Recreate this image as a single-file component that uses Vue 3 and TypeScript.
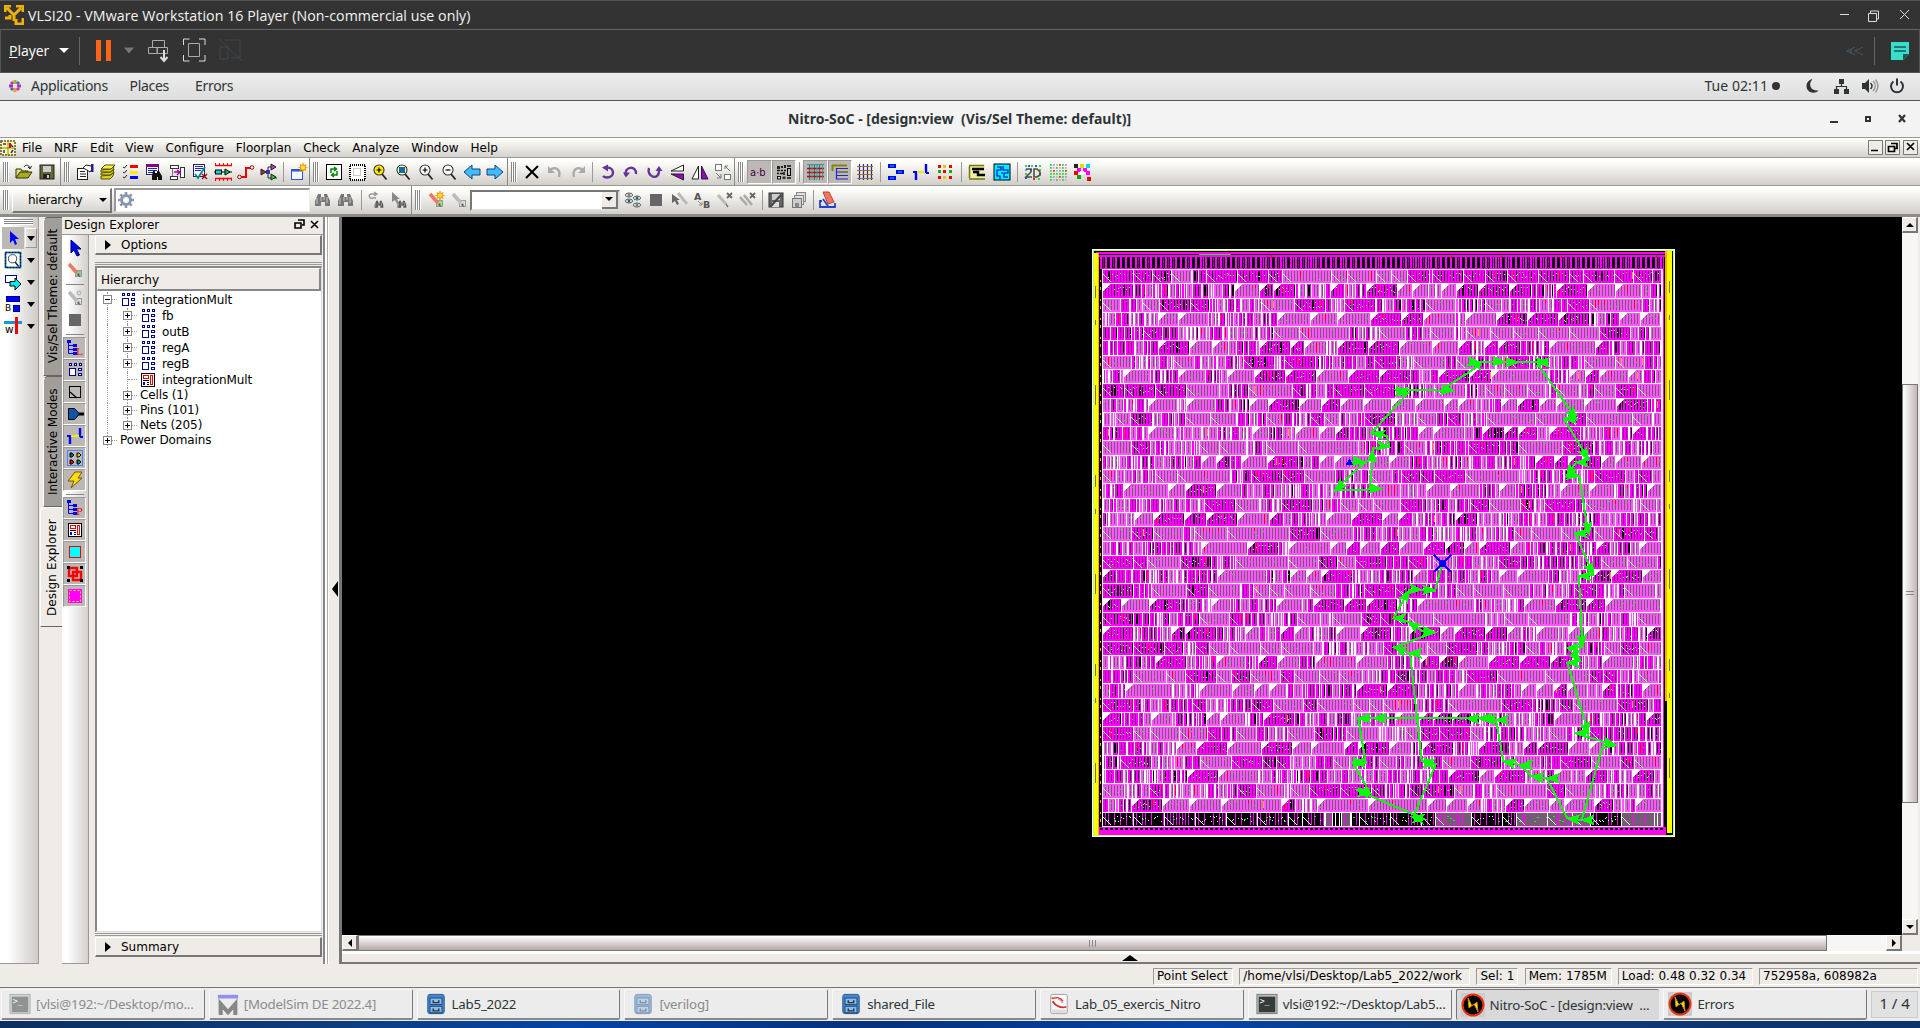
<script setup lang="ts">
type Item = { i?: string; sep?: boolean; on?: boolean; w?: number }

const P = (d: string, c: string, w = 1.3) => `<path d="${d}" fill="none" stroke="${c}" stroke-width="${w}"/>`
const F = (d: string, c: string, s = 'none') => `<path d="${d}" fill="${c}" stroke="${s}"/>`
const R = (x: number, y: number, w: number, h: number, c: string, s = 'none') =>
  `<rect x="${x}" y="${y}" width="${w}" height="${h}" fill="${c}" stroke="${s}"/>`
const dots = (list: [number, number, string][], s: number) => list.map(([x, y, c]) => R(x, y, s, s, c)).join('')

const lens = (fill: string, inner: string) =>
  P('M11 11L15.500 16.500', '#222', 1.8) + `<circle cx="8" cy="7" r="5" fill="${fill}" stroke="#333" stroke-width="1.100"/>` + inner
const binoc = (c: string) =>
  F('M4 3h3v3h3V3h3l3 7v5h-5v-4H7v4H1v-5z', c) + P('M3 7v6M7 6v4M13 6v6M10 5v4', '#ddd', 0.8)
const pencil = (a: string, b: string) =>
  R(9.5, 9.5, 6, 6, b, '#999') + P('M3 3L11 12', a, 3.6) + F('M11 14l3 2-1-4z', '#555')
const hier =
  R(3.5, 2.5, 2, 2, '#fff', '#008') + R(8.5, 2.5, 2, 2, '#fff', '#008') + R(13.5, 2.5, 2, 2, '#fff', '#008') +
  R(3.5, 7.5, 6, 7, '#fff', '#008') + R(12.5, 7.5, 3, 2, '#fff', '#008') + R(12.5, 12.5, 3, 2, '#fff', '#008')
const tree = (t: string) =>
  R(1, 1, 4, 3, '#00f') + P('M2.500 3V14.500H9M3 6.500H9M3 10.500H9', '#00f', 1) + R(7, 5, 4, 3, '#00f') + R(7, 9, 4, 3, '#00f') +
  R(7, 13, 4, 3, '#00f') + t
const leaf =
  R(2.5, 2.5, 13, 13, '#fff', '#000') + R(4.5, 4.5, 5, 3, '#fff', '#e00') + R(11.5, 4.5, 2, 9, '#fff', '#e00') +
  R(4, 11, 2, 3, '#00f') + P('M4 9.500h6M8 11.500h2M8 13.500h2', '#000', 1)
const stars = P('M13 0v9M8.500 4.500h9M10 1.500l6 6M16 1.500l-6 6', '#f90', 1.2) + '<circle cx="13" cy="4.500" r="2.600" fill="#fd4" stroke="#e90"/>'

const icons: Record<string, string> = {
  open: F('M1 15V6h5l1 2h6v2', '#dd8', '#330') + F('M1 15l4-6h12l-4 6z', '#aa2', '#330') + P('M9 4c2-3 5-2 6 1M13 4l2 2 1.500-3', '#222', 1),
  save: R(2, 2, 14, 14, '#663', '#222') + R(5, 3, 8, 6, '#ccc') + R(5, 11, 7, 5, '#222') + R(9, 12, 2, 3, '#ccc'),
  props: R(1.5, 5.5, 10, 11, '#fff', '#222') + P('M4 8.500h5M4 11h6M4 13.500h6', '#222', 1) + F('M7 5l3-3 5 1 2 2-3 4-3-2z', '#fff', '#222') + R(15, 1, 2.500, 8, '#228'),
  layers: F('M2 13l10-1 3-3-1 4-3 3H2z', '#dc2', '#550') + F('M2 10l10-1 3-3-1 4-3 2H2z', '#dc2', '#550') + F('M2 7l10-1 3-3-1 4-3 2H2z', '#dc2', '#550') + F('M6 2h10l-4 4H2z', '#fe4', '#550'),
  list: R(8, 2, 8, 3, '#f00') + R(8, 8, 8, 3, '#fe0') + R(8, 13, 8, 3, '#00f') + P('M1 4l1.500 1L5 2M1 9l1.500 1L5 7M1 14l1.500 1L5 12', '#222', 1),
  find: R(1.5, 1.5, 12, 10, '#fff', '#226') + R(1, 1, 13, 3, '#808') + P('M3 5.500h9M3 7.500h9M3 9.500h5', '#22c', 1) + F('M8 8h2v2h2V8h2l3 5v4h-4v-3h-1v3H7v-4z', '#111'),
  swap: R(2.5, 2.5, 8, 3, '#fff', '#333') + R(2.5, 13.500, 7, 3, '#fff', '#333') + R(12.5, 4.500, 4, 10, '#fff', '#333') + P('M4.500 6v7', '#777', 1) + P('M6 9h6M9 7l3 2-3 3', '#a0a', 1.4),
  check: R(2.5, 1.5, 11, 12, '#fff', '#226') + P('M4 3.500h8M4 5.500h8M4 7.500h6', '#22c', 1) + P('M4 11l3 4L14 4', '#088', 1.8) + P('M11 11l5 5M16 11l-5 5', '#a00', 1.4),
  chain: P('M1 2.500h17M1 15.500h17', '#f00', 1.6) + P('M1.500 3V0M5.500 3V0M9.500 3V0M13.500 3V0M17.500 3V0M1.500 15v3M5.500 15v3M9.500 15v3M13.500 15v3M17.500 15v3', '#f00', 1) + P('M0 9h18', '#000', 1) + R(1.5, 7, 6, 4, '#0dd', '#000') + F('M11 6l5 3-5 3z', '#0c6', '#000'),
  route: P('M3 14h6V5h6', '#e00', 2) + `<circle cx="2.500" cy="14" r="1.800" fill="#fff" stroke="#900"/><circle cx="15" cy="4.500" r="1.800" fill="#fff" stroke="#900"/>`,
  logic: P('M3 9h5V4h4M8 9v6h9', '#224', 1) + F('M11 1l5 3-5 3z', '#c3c', '#222') + F('M11 11l5 3-5 3z', '#2c2', '#222') + F('M1 6l5 3-5 3z', '#a33', '#222') + R(6, 7, 4, 4, '#33a'),
  newwin: R(1.5, 6.500, 11, 10, '#f8f8ff', '#35c') + P('M1 7.500h12', '#35c', 2) + stars,
  refresh: R(1.5, 1.5, 15, 15, '#fff', '#000') + P('M6 10V6h5M9 4l2.500 2L9 8M12 8v4H7M9 10l-2.500 2L9 14', '#080', 1.5),
  selbox: `<rect x="1.500" y="1.500" width="15" height="15" fill="#fff" stroke="#000" stroke-width="2" stroke-dasharray="1 1" shape-rendering="crispEdges"/>` + R(5.5, 5.500, 7, 7, '#fff', '#ccc'),
  zoomfit: lens('#fe0', P('M8 4.500v5M5.500 7h5', '#000', 1.2)), zoomsel: lens('#fff', R(5.5, 4.5, 5, 5, '#26a', '#084')),
  zoomin: lens('#fff', P('M8 4.500v5M5.500 7h5', '#000', 1.2)), zoomout: lens('#fff', P('M5.500 7h5', '#000', 1.2)),
  left: F('M1 9l8-7v4h8v6H9v4z', '#4bf', '#147'), right: F('M17 9L9 2v4H1v6h8v4z', '#4bf', '#147'),
  del: P('M3 3L15 15M15 3L3 15', '#000', 2),
  undo: P('M4 7c5-4 11-1 9 7', '#aaa', 2.4) + F('M2 3v7h7z', '#aaa'), redo: P('M14 7C9 3 3 6 5 14', '#aaa', 2.4) + F('M16 3v7H9z', '#aaa'),
  rotl: P('M8 4.500c8 0 8 10 0 10-2 0-3-.5-4-1.500', '#639', 2.4) + F('M3 4.500l6-3v7z', '#639'), rotu: P('M4 13C1 3 15 2 14 11', '#639', 2.400) + F('M1 9.500l3 5 4-5z', '#639'),
  rotr: P('M4 5c-3 9 10 13 10 3', '#639', 2.400) + F('M10.500 8l3.500-5 3.500 5z', '#639'),
  flipv: F('M15.500 2v6H3z', '#fff', '#222') + F('M15.500 17v-6H3z', '#90c', '#222'), fliph: F('M7.500 3v13H1z', '#fff', '#222') + F('M10.500 3v13H17z', '#90c', '#222'),
  group: R(1.5, 1.500, 6, 6, '#fff', '#777') + R(10.5, 11.500, 6, 5, '#fff', '#777') + P('M16 8l-5-5M11 6V3h3M2 10l5 5M3 15h4v-4', '#777', 1),
  ab: '<text x="0" y="13" font-size="10" font-family="DejaVu Sans" fill="#404">a·b</text>',
  noise: R(2, 3, 3, 3, '#222') + R(6, 3, 2, 2, '#222') + R(9, 2, 2, 3, '#222') + P('M2 7.500h3M6 7.500h2M9 7.500h2M2 10.500h2M5 10.500h3M9 9v3', '#111', 1.6) + R(2.5, 13.500, 3, 2.500, '#ddd', '#111') + R(7.5, 13.500, 3, 2.500, '#333') + R(12.5, 5.500, 3, 7, '#bbb', '#000') + P('M12 15h4M12 3h4', '#111', 1.5),
  grid1: P('M3.500 1v16M8.500 1v16M13.500 1v16', '#088', 1.2) + P('M1 5.500h17M1 9.500h17M1 13.500h17', '#c00', 1.3) + P('M1 1.500h17', '#399', 1) + P('M6 1v16M11 1v16M16.500 1v16', '#399', 1),
  grid2: P('M1 2.500h15M1.500 2v6', '#880', 2) + P('M5 5.500h12M5 9h12M5 12.500h12M5 16h12M5.500 5v11', '#22d', 1.2) + P('M7 7.500h10M7 11h10', '#cc0', 1),
  grid3: P('M3.500 1v16M7.500 1v16M11.500 1v16M15.500 1v16', '#22a', 1.2) + P('M1 3.500h16M1 7.500h16M1 11.500h16M1 15.500h16', '#970', 1),
  bars: R(1, 1, 8, 4, '#00f') + R(9, 7, 8, 4, '#00f') + R(1, 13, 8, 4, '#00f') + P('M3 3h4M11 9h4M3 15h4', '#0d8', 1),
  wire: P('M4 9v8M14 1v9', '#00f', 2.4) + P('M1 9h4M14 10h3', '#00f', 2) + P('M5 9H13', '#ee0', 2.2),
  pts: dots([[2, 2, '#e00'], [7, 2, '#dc0'], [13, 2, '#e00'], [2, 7, '#0b0'], [7, 7, '#e00'], [13, 7, '#0b0'], [2, 13, '#e00'], [7, 13, '#dc0'], [13, 13, '#e00']], 3),
  lay: R(1, 2, 16, 14, '#eea') + P('M1 2.500h15M1 16h16M1.500 3v12', '#770', 1.5) + P('M4 6h12M5 9h5v3h7', '#000', 2.4),
  maze: R(1, 1, 16, 16, '#0ef', '#000') + P('M4 4h4v3H4v6h3v3M10 3v4h5v3h-4v4h4M8 10h2', '#00c', 1.1),
  map: dots([[1, 2, '#4c4'], [4, 2, '#44f'], [7, 2, '#4c4'], [11, 2, '#44f'], [15, 2, '#4c4'], [1, 6, '#88f'], [6, 6, '#44f'], [15, 6, '#4c4'], [1, 10, '#4c4'], [15, 10, '#e22'], [1, 14, '#44f'], [9, 15, '#e22'], [14, 15, '#4c4']], 2) + P('M2 6h5v3L2 14h6M10 14V6h3l3 3v3l-3 2z', '#454', 1.6),
  map2: dots([1, 4, 7, 10, 13, 16].flatMap((x, a) => [1, 4, 7, 10, 13, 16].map((y, b) => [x, y, ['#4c4', '#99f', '#bbb', '#e33'][(a * b + a) % 4]] as [number, number, string])), 1.8),
  mosaic: dots([[1, 1, '#222'], [7, 1, '#dd0'], [13, 1, '#0dd'], [4, 5, '#f0f'], [10, 5, '#f0f'], [1, 8, '#e00'], [7, 8, '#fff'], [13, 8, '#f0f'], [4, 12, '#0a0'], [10, 12, '#ddd'], [14, 14, '#e00']], 4),
  bin: binoc('#777'), binsm: P('M9 3H4c-3 1-2 5 2 4h3M7 1l3 2-3 2', '#999', 1.4) + '<g transform="translate(7 8) scale(.58)">' + binoc('#555') + '</g>',
  curbin: F('M2 1v10l3-2 2 4 2-1-2-4h3z', '#888') + '<g transform="translate(7 8) scale(.58)">' + binoc('#555') + '</g>',
  mark: pencil('#e76', '#9d8') + stars,
  markoff: pencil('#bbb', '#ddd'), eyes: [[5, 4], [13, 7], [5, 10], [13, 14]].map(([x, y], n) => `<ellipse cx="${x}" cy="${y}" rx="3.600" ry="2" fill="#dee" stroke="#555"/><circle cx="${x}" cy="${y}" r="1.300" fill="${n === 1 || n === 2 ? '#066' : '#777'}"/>`).join(''),
  stop: R(3, 3, 12, 12, '#666'), curpen: P('M8 2l9 11', '#bbb', 3) + F('M2 3v9l3-2 2 4 2-1-2-4h3z', '#666'),
  ab2: '<text x="1" y="9" font-size="9.500" font-weight="bold" font-family="DejaVu Sans" fill="#555">A</text><text x="10" y="16.500" font-size="9.500" font-weight="bold" font-family="DejaVu Sans" fill="#555">B</text>' + P('M5 10l4 4M6 14h3v-3', '#888', 1),
  penx: P('M2 4l8 9', '#bbb', 3) + P('M10 13l2 3', '#777', 1.4) + P('M11 2l5 5M16 2l-5 5', '#666', 1.8), penx2: P('M1 6l7 8M5 4l8 10', '#aaa', 2.6) + P('M11 2l5 5M16 2l-5 5', '#666', 1.8),
  dsk: R(2, 2, 14, 14, '#666', '#333') + R(5, 3, 8, 6, '#ccc') + R(5, 11, 7, 5, '#ddd') + P('M4 15L14 4', '#444', 2),
  pages: R(6.5, 1.500, 9, 9, '#ddd', '#888') + R(4.5, 4.5, 9, 9, '#ddd', '#888') + R(2.5, 7.5, 9, 9, '#ccc', '#777') + R(5, 12, 4, 4, '#888'),
  erase: F('M5 1h6l5 10-6 2z', '#e76', '#b43') + P('M4 10H2v6h15v-4M5 8l5 7', '#24c', 1.8),
  cursor: F('M5 1v13l3-3 3 6 2.500-1-3-6H15z', '#00f', '#006'), tcur: F('M6 2v12l3-3 2 5 2-1-2-5h4z', '#00f'),
  pen: pencil('#e87b60', '#8c8'), wand: pencil('#bbb', '#ddd') + `<circle cx="13" cy="4" r="2" fill="#ddd" stroke="#aaa"/>`,
  treeL: tree('<text x="10" y="16" font-size="10" font-family="DejaVu Serif" fill="#e00">L</text>'), treeP: tree('<text x="10" y="16" font-size="10" font-family="DejaVu Serif" fill="#e00">P</text>'),
  hier, leaf, cell: R(3.5, 3.500, 11, 11, '#bbb', '#000') + P('M4 9l7 6', '#000', 1.2), port: P('M9 9h9', '#000', 3) + F('M2.500 3.500h6l5 5.500-5 5.500h-6z', '#15a', '#000'),
  ports: R(1.5, 1.5, 15, 15, '#bbb', '#48f') + [[4, 4, '#15a'], [11, 4, '#cc0'], [4, 11, '#e00'], [11, 11, '#086']].map(([x, y, c]) => F(`M${x} ${y}h2l2 2-2 2h-2z`, c as string, '#000')).join(''),
  bolt: F('M9 1h7l-4 6h4L5 17l3-7H2z', '#fd1', '#750'), cyan: R(3.5, 3.500, 11, 11, '#0ff', '#e00'),
  redsq: P('M3 3h8v8H3zM7 7h8v8H7z', '#f00', 2.400) + dots([[1, 1, '#000'], [14, 1, '#000'], [1, 14, '#000'], [14, 14, '#000']], 3),
  mag: R(2, 2, 14, 14, '#f0f') + `<rect x="3.500" y="3.500" width="11" height="11" fill="none" stroke="#fe0" stroke-dasharray="2 2"/>`,
  zsel: `<rect x="1.500" y="1.500" width="15" height="15" fill="#fff" stroke="#0a0" stroke-width="1.500"/><rect x="1.500" y="1.500" width="15" height="15" fill="none" stroke="#00c" stroke-width="1.500" stroke-dasharray="2 1"/>` + '<g transform="translate(2 2) scale(.82)">' + lens('#fff', '') + '</g>',
  view: R(1.5, 2.500, 11, 7, '#fff', '#008') + F('M6 8.500h5V5l6 6-6 6v-4H6z', '#0ee', '#000'),
  block: R(2.5, 1.5, 13, 5, '#00f', '#008') + R(9.5, 10.500, 6, 6, '#00f', '#008') + '<text x="1" y="16" font-size="9" font-family="DejaVu Sans">B</text>',
  wcross: R(0, 4, 18, 3, '#19d') + R(11, 0, 3, 17, '#f00') + '<text x="1" y="15.500" font-size="10.500" font-family="DejaVu Sans">w</text>',
  gear: `<circle cx="9" cy="9" r="4.500" fill="none" stroke="#89a" stroke-width="3"/>` + P('M9 1v3M9 14v3M1 9h3M14 9h3M3.300 3.300l2 2M12.700 12.700l2 2M14.700 3.300l-2 2M5.300 12.700l-2 2', '#89a', 2.600),
}

const many = (s: string): Item[] => s.split(' ').map(n => n === '|' ? { sep: true } : n.startsWith('+') ? { i: n.slice(1), on: true } : { i: n })
const bar1 = [
  many('open save'), many('props layers list find swap check chain route logic | newwin'),
  many('refresh selbox zoomfit zoomsel zoomin zoomout left right'),
  many('del undo redo | rotl rotu rotr flipv fliph group'),
  many('+ab +noise | +grid1 +grid2 grid3 | bars wire pts | lay maze | map map2 mosaic'),
]
const bar2a = many('bin bin | binsm curbin')
const bar2c = many('eyes stop curpen ab2 penx penx2 | dsk pages | erase')
const side = many('cursor pen | wand stop | +treeL +hier +cell +port +wire +ports +bolt | +treeP +leaf +cyan +redsq +mag')
const tools = ['tcur', 'zsel', 'view', 'block', 'wcross']
const menus = ['File', 'NRF', 'Edit', 'View', 'Configure', 'Floorplan', 'Check', 'Analyze', 'Window', 'Help']

const nodes = [
  { t: 'integrationMult', l: 0, b: '−', i: 'hier', h: 16 }, { t: 'fb', l: 1, b: '+', i: 'hier', h: 16 },
  { t: 'outB', l: 1, b: '+', i: 'hier', h: 16 }, { t: 'regA', l: 1, b: '+', i: 'hier', h: 16 },
  { t: 'regB', l: 1, b: '+', i: 'hier', h: 16 }, { t: 'integrationMult', l: 1, b: '', i: 'leaf', h: 16 },
  { t: 'Cells (1)', l: 1, b: '+', i: '', h: 15 }, { t: 'Pins (101)', l: 1, b: '+', i: '', h: 15 },
  { t: 'Nets (205)', l: 1, b: '+', i: '', h: 15 }, { t: 'Power Domains', l: 0, b: '+', i: '', h: 15 },
]
const status = [['Point Select', 80], ['/home/vlsi/Desktop/Lab5_2022/work', 231], ['Sel: 1', 42], ['Mem: 1785M', 87], ['Load: 0.48 0.32 0.34', 135], ['752958a, 608982a', 159]] as [string, number][]
const tasks = [
  ['[vlsi@192:~/Desktop/mo...', 'term', 1], ['[ModelSim DE 2022.4]', 'm', 1], ['Lab5_2022', 'cab', 0], ['[verilog]', 'cab', 1],
  ['shared_File', 'cab', 0], ['Lab_05_exercis_Nitro', 'doc', 0], ['vlsi@192:~/Desktop/Lab5...', 'term', 0],
  ['Nitro-SoC - [design:view  ...', 'nitro', 0], ['Errors', 'nitro', 0],
] as [string, string, number][]
const taskIcons: Record<string, string> = {
  term: R(1, 1.500, 22, 21, '#bbb', '#777') + R(3, 4, 18, 17, '#343c3a') + '<text x="4" y="12" font-size="9" font-family="DejaVu Sans Mono" fill="#fff">&gt;_</text>',
  m: R(1, 2, 22, 4, '#33f') + P('M4 24V12l8 9 8-9v12', '#222', 4.500),
  cab: `<rect x="3" y="1.500" width="18" height="21" rx="2.500" fill="#48c" stroke="#258"/>` + R(5.5, 5.500, 13, 7, '#8be', '#247') + R(5.5, 14.500, 13, 7, '#8be', '#247') + P('M9 8v2.500h6V8M9 17v2.500h6V17', '#333', 1.600),
  doc: `<rect x="3" y="1.500" width="18" height="21" rx="2" fill="#fafafa" stroke="#999"/>` + R(4, 18, 16, 4, '#ddd') + P('M4 6c5-2 10 0 12 3M5 9c3 5 9 8 15 6', '#c33', 2) + P('M5 5c4 0 9 2 11 6', '#e99', 1.500),
  nitro: R(0, 0, 24, 24, '#ccc') + `<circle cx="12" cy="12" r="10.500" fill="#000" stroke="#e31" stroke-width="2"/>` + F('M7 5l1 10 5-4 4 8-1-10-5 4z', '#fe2', '#c80'),
}

/* Standard-cell layout, drawn row by row from a fixed seed */
let seed = 20220
const rnd = () => { seed = (seed * 1664525 + 1013904223) >>> 0; return seed / 4294967296 }
const layer: Record<string, string[]> = {}
const order = ['mag', 'pink', 'grey', 'plum', 'black', 'stripe', 'green', 'red', 'orange', 'white']
const color: Record<string, string> = { mag: '#f0f', pink: '#ff55ff', grey: '#765a76', plum: '#930093', black: '#000', stripe: '#f0f', green: '#0f0', red: '#f00', orange: '#fa0', white: '#fff' }
order.forEach(k => { layer[k] = [] })
const box = (k: string, x: number, y: number, w: number, h: number) => { layer[k]!.push(`M${x} ${y}h${w}v${h}h${-w}z`) }
const X0 = 1103, X1 = 1662, ROWS = 39, PITCH = 14.290
for (let r = 0; r < ROWS; r++) {
  const y = Math.round(269 + r * PITCH), h = Math.round(269 + (r + 1) * PITCH) - y
  const last = r === ROWS - 1
  box('white', X0 - 1, y, X1 - X0 + 2, 1)
  let x = X0, run = 0, kind = 0
  while (x < X1) {
    if (run <= 0) {
      const busy = r > 3 && r < 14 && x < 1240 ? 0.68 : 0.4
      const q = rnd()
      kind = q < busy ? 2 : q < busy + (1 - busy) * 0.56 ? 1 : 0
      run = kind === 2 ? 2 + Math.floor(rnd() * 4) : 1
    }
    run--
    let w = kind === 0 ? [31, 31, 19, 22, 14][Math.floor(rnd() * 5)]! : kind === 1 ? 14 + Math.floor(rnd() * (rnd() < 0.2 ? 50 : 20)) : 3 + Math.floor(rnd() * 7)
    if (r === 0 || last) { if (kind === 2 && rnd() < 0.5) { kind = 0; w = 31 } }
    w = Math.min(w, X1 - x)
    const dark = kind === 0 || (kind === 2 && rnd() < 0.6)
    const faint = rnd() < 0.4
    box(last ? (dark ? 'black' : 'grey') : dark ? 'mag' : 'pink', x, y + 1, w, h - 1)
    for (let i = 2; i < w - 1; i += 3) {
      if (last) { if (rnd() < 0.6) box('stripe', x + i, y + 1, 1, h - 2); if (rnd() < 0.2) box('green', x + i, y + 4 + Math.floor(rnd() * 6), 2, 1); continue }
      if (dark) {
        const k = rnd() < (faint ? 0.25 : 0.65)
        box(k ? 'black' : 'plum', x + i, y + 2, k && rnd() < 0.15 ? 2 : 1, h - 4)
      } else box('grey', x + i, y + 2, 1, h - 4)
      if (rnd() < 0.22) box('green', x + i, y + 3 + Math.floor(rnd() * 8), 1, 1)
      if (rnd() < 0.035) box('red', x + i, y + 2, 1, 3 + Math.floor(rnd() * 8))
      if (rnd() < 0.006) box('orange', x + i, y + 3, 1, 7)
    }
    if (kind === 0) for (let i = 5; i < w - 3; i += 3) {
      if (rnd() < 0.7) box('white', x + i, y + 4 + Math.floor(rnd() * 3) * 2, 1, 1)
      if (rnd() < 0.3) box('white', x + i + 1, y + 5 + Math.floor(rnd() * 3) * 2, 1, 1)
    }
    if (w > 12) {
      if (r % 2) layer.white!.push(`M${x} ${y}h8l-8 8z`)
      else { for (let i = 0; i < 8; i++) box('white', x + i, y + 5 + i, 1, 1) }
    } else if (rnd() < 0.3) box('white', x, y, 1, h)
    box('white', x + w - 1, y, 1, h)
    if (kind === 2 && w > 4 && rnd() < 0.2) box('white', x + Math.floor(w / 2), y, 1, h)
    x += w
  }
}
for (let x = 1100; x < 1664; x += 5) {
  box('mag', x, 257, 2, 12)
  if (rnd() < 0.55) box(rnd() < 0.4 ? 'mag' : 'plum', x + 3, 257, 1, 12)
  if (rnd() < 0.04) box('red', x + 1, 255, 1, 3)
  box('black', x, 828, 3, 2)
}
const layers = order.map(k => ({ k, c: color[k], d: layer[k]!.join('') }))

const pts = (s: string, oy: number) => s.split(' ').map(p => { const [x, y] = p.split(',').map(Number); return [1320 + x! / 3, oy + y! / 3] as [number, number] })
const net = [
  ...pts('88,396 135,396 45,480 185,478 150,474 160,355 208,350 200,318 155,308 265,188 225,180 400,182 370,176 480,105 450,96 590,97 685,97 655,105 770,268 732,266 805,388 768,397 740,438 778,438 804,606 766,610 820,735 777,738', 330),
  ...pts('777,50 787,260 742,263 780,302 742,308 805,518 766,520 885,555 845,568 785,780 742,775 680,655 632,648 600,615 550,603 528,480 490,475 115,475 137,608 98,606 150,700 110,690 315,778 280,770 348,612 305,603 270,280 222,262 345,217 305,212 265,185 220,175 268,90 345,92 367,10', 560),
]
const netPath = net.map(p => p.map(v => v.toFixed(1)).join(',')).join(' ')
const heads = [
  ...pts('135,396 45,482 185,478 158,360 208,350 155,308 265,188 225,180 402,182 450,97 480,98 595,97 555,97 685,97 650,97 770,270 732,266 806,390 768,397 740,440 778,438 808,612 766,610 820,735 777,738', 330),
  ...pts('787,262 742,263 782,302 742,308 805,525 766,520 886,555 785,780 742,775 680,655 632,648 600,615 550,603 528,480 490,475 475,475 440,475 160,475 115,475 137,610 98,606 150,700 110,690 315,778 275,770 348,612 305,603 268,280 222,262 345,217 265,185 220,175 268,90 305,90 345,90', 560),
].map(([x, y], n) => {
  const ref = net.reduce((b, p) => Math.hypot(p[0] - x, p[1] - y) < Math.hypot(b[0] - x, b[1] - y) ? p : b, net[0]!)
  const k = net.indexOf(ref), q = net[Math.max(0, k - 1)]!
  const t = n % 2 ? Math.atan2(y - q[1], x - q[0]) : (x > q[0] ? 0.1 : Math.PI)
  const pt = (l: number, o: number) => `${(x - l * Math.cos(t) - o * Math.sin(t)).toFixed(1)},${(y - l * Math.sin(t) + o * Math.cos(t)).toFixed(1)}`
  return `${pt(0, 0)} ${pt(12, 4.5)} ${pt(9, 0)} ${pt(12, -4.5)}`
})
</script>

<template>
  <div class="screen">
    <header class="vm-title">
      <svg class="vmlogo" viewBox="0 0 20 20"><path d="M1 7V1h6M12 1h7v6M12 14v5h7v-6M3 3l7 7M17 3l-7 7M10 9v7M1 13h5v-3" fill="none" stroke="#f0b10b" stroke-width="3" /></svg>
      <span>VLSI20 - VMware Workstation 16 Player (Non-commercial use only)</span>
      <svg class="winbtns" viewBox="0 0 90 28"><path d="M10 13.500h9M38.500 12.500h8v8h-8zM40.500 12v-2h8v8h-2M70 9l9 9M79 9l-9 9" fill="none" stroke="#ddd" /></svg>
    </header>
    <div class="vm-bar">
      <span class="player"><u>P</u>layer</span><i class="tri lt" /><i class="vline" />
      <svg class="vmicons" viewBox="0 0 170 42">
        <path d="M16 10h5v21h-5zM26 10h5v21h-5z" fill="#ff6417" /><path d="M44 17.500h10l-5 6z" fill="#777" />
        <g fill="none" stroke="#aaa"><path d="M72.500 10.500h12v7h-12zM68.500 17.500h8.500v6h-8.500zM77.500 17.500h10v6h-10z" /><path d="M84 20v10M80.500 27l3.500 4 3.500-4" stroke="#ddd" stroke-width="2" /><path d="M103.500 15v-6h6M119 9h6v6M125 25v6h-6M109.500 31h-6v-6" stroke="#ddd" /><path d="M108.500 13.500h11v13h-11z" /><path d="M145 10h15v18h-9M140 17h8v12h-8zM139 9l23 22" stroke="#3e4953" /></g>
      </svg>
      <span class="grow" />
      <svg class="rew" viewBox="0 0 18 12"><path d="M9 2L1 6l8 4M17 2L9 6l8 4M5 4v4" fill="none" stroke="#46515b" stroke-width="1.300" /></svg><i class="vline" />
      <svg class="note" viewBox="0 0 20 20"><path d="M1 1h18v12l-6 6H1z" fill="#35dfc8" /><path d="M4 6h12M4 10h12" stroke="#255" stroke-width="1.500" /><path d="M13 19v-6h6z" fill="#255" /></svg>
    </div>
    <nav class="gnome">
      <svg class="flower" viewBox="0 0 14 14"><g stroke-width="3"><path d="M7 1v4" stroke="#9b3" /><path d="M7 9v4" stroke="#e93" /><path d="M1 7h4" stroke="#93c" /><path d="M9 7h4" stroke="#a3c" /><path d="M3 3l2 2M9 9l2 2" stroke="#c39" /><path d="M11 3L9 5M5 9l-2 2" stroke="#569" /></g></svg>
      <span class="n1">Applications</span><span class="n2">Places</span><span class="n3">Errors</span>
      <span class="grow" /><span class="clock">Tue 02:11</span><i class="dot" />
      <svg class="tray" viewBox="0 0 120 28">
        <path d="M12.500 7C8 12 10 19 18.500 18.500 15 22.500 6.500 21 6.500 14c0-4 3-6.500 6-7z" fill="#2e3436" />
        <g fill="#2e3436"><path d="M39 7h5v5h-5zM34 17h5v5h-5zM44 17h5v5h-5zM62 11h3l4-4v14l-4-4h-3z" /></g>
        <g fill="none" stroke="#2e3436"><path d="M41.500 11v3M36.500 17v-2.500h10V17" stroke-width="1.200" /><path d="M70.500 11c2 2 2 4 0 6" stroke-width="1.500" /><path d="M73 9c3 3 3 7 0 10M75.500 7.500c3 4 3 9 0 13" stroke="#999" stroke-width="1.400" /><path d="M93.500 9.500a6 6 0 1 0 7 0M97 6.500v7" stroke-width="2" /></g>
      </svg>
    </nav>
    <div class="apptitle">
      <span class="grow side-l" /><b>Nitro-SoC - [design:view&nbsp; (Vis/Sel Theme: default)]</b>
      <svg class="appbtns" viewBox="0 0 90 34"><path d="M0 21h8M69 14l6 7M75 14l-6 7" stroke="#2e3436" stroke-width="2.200" /><path d="M36 16h4v4h-4z" fill="none" stroke="#2e3436" stroke-width="2" /></svg>
    </div>
    <div class="menu">
      <svg class="mlogo" viewBox="0 0 16 16"><rect x="1" y="1" width="14" height="14" fill="#ff9" stroke="#552" stroke-width="1.500" stroke-dasharray="2 1" /><path d="M8 1v14M1 8h14" stroke="#882" /><path d="M3 4h3M10 4l3 3M4 10v3M11 13l2-3" stroke="#22c" stroke-width="1.500" /><path d="M10 8V3" stroke="#e00" stroke-width="2" /></svg>
      <span v-for="m in menus" :key="m">{{ m }}</span><span class="grow" />
      <svg class="mdi" viewBox="0 0 52 18"><g fill="#efebe7" stroke="#777"><path d="M1.500 1.500h14v14h-14zM18.500 1.500h14v14h-14zM36.500 1.500h14v14h-14z" /></g><path d="M4 11.500h7M24 4.500h6v5h-2M21.500 7.500h6v5h-6zM40 4l7 7M47 4l-7 7" fill="none" stroke="#000" stroke-width="1.700" /></svg>
    </div>
    <div class="bar b1">
      <div v-for="(g, n) in bar1" :key="n" class="group" :class="'g' + n">
        <i class="handle" />
        <template v-for="(it, k) in g" :key="k"><i v-if="it.sep" class="sep" /><span v-else class="slot" :class="{ on: it.on }"><svg viewBox="0 0 18 18" v-html="icons[it.i!]" /></span></template>
      </div>
    </div>
    <div class="bar b2">
      <div class="group ga"><i class="handle" /><span class="hbtn">hierarchy<i class="tri" /></span><span class="field"><svg viewBox="0 0 18 18" v-html="icons.gear" /></span>
        <template v-for="(it, k) in bar2a" :key="k"><i v-if="it.sep" class="sep" /><span v-else class="slot"><svg viewBox="0 0 18 18" v-html="icons[it.i!]" /></span></template>
      </div>
      <div class="group gb"><i class="handle" /><span v-for="n in ['mark', 'markoff']" :key="n" class="slot"><svg viewBox="0 0 18 18" v-html="icons[n]" /></span><span class="combo"><span><i class="tri" /></span></span>
        <template v-for="(it, k) in bar2c" :key="k"><i v-if="it.sep" class="sep" /><span v-else class="slot"><svg viewBox="0 0 18 18" v-html="icons[it.i!]" /></span></template>
      </div>
    </div>
    <main class="main">
      <aside class="tools"><i class="hhandle" /><div v-for="(t, n) in tools" :key="t" class="tool" :class="{ on: n === 0 }"><svg viewBox="0 0 18 18" v-html="icons[t]" /><span><i class="tri big" /></span></div></aside>
      <aside class="tabs"><span class="t1">Vis/Sel Theme: default</span><span class="t2">Interactive Modes</span><span class="t3">Design Explorer</span></aside>
      <section class="dock">
        <div class="docktitle"><span>Design Explorer</span><svg viewBox="0 0 28 14"><path d="M5 2h6v5H9M2 5h6v5H2zM18 3l7 7M25 3l-7 7" fill="none" stroke="#000" stroke-width="1.600" /></svg></div>
        <div class="dockbody">
          <div class="vtools"><template v-for="(it, k) in side" :key="k"><i v-if="it.sep" class="hsep" /><span v-else class="vslot" :class="{ on: it.on }"><svg viewBox="0 0 18 18" v-html="icons[it.i!]" /></span></template></div>
          <div class="panel">
            <div class="fold"><i class="rtri" />Options</div><i class="ridge" />
            <div class="treebox">
              <div class="thead">Hierarchy</div>
              <div v-for="(n, k) in nodes" :key="k" class="node" :class="['l' + n.l, { leafn: !n.b }]" :style="{ height: n.h + 'px' }">
                <i v-if="n.l && k < 9" class="stem" /><i v-if="n.b" class="pm" :class="{ plus: n.b === '+' }" /><i v-else class="nopm" /><i class="twig" /><svg v-if="n.i" viewBox="0 0 18 18" v-html="icons[n.i]" /><span>{{ n.t }}</span>
              </div>
            </div>
            <i class="ridge low" /><div class="fold"><i class="rtri" />Summary</div>
          </div>
        </div>
      </section>
      <div class="splitter"><i class="ltri" /></div>
      <section class="work">
        <div class="view">
          <svg class="chip" viewBox="342 217 1560 718" preserveAspectRatio="none" shape-rendering="crispEdges">
            <rect x="1092" y="249" width="583" height="588" fill="#fff" /><rect x="1093" y="250" width="581" height="586" fill="#b8ff60" /><rect x="1094" y="251" width="579" height="584" fill="#000" />
            <path d="M1096 252h570v2h-570zM1098 255h568v2h-568zM1101 268h562v1h-562zM1098 827h568v8h-568zM1663 256h1v579h-1z" fill="#f0f" />
            <path d="M1094 253h5v582h-5zM1667 251h5v582h-5z" fill="#ff0" />
            <path d="M1098 253h1v582h-1zM1100 280h1v547h-1zM1665 251h2v450h-2z" fill="#fa0" />
            <path d="M1095.500 256v578M1669.500 251v582" stroke="#770" stroke-dasharray="0 30 12 22 5 60 20 40" />
            <path d="M1100.500 282v545" stroke="#000" stroke-dasharray="5 3 9 2" />
            <path d="M1199 254h32v1h-32z" fill="#0f0" />
            <path v-for="l in layers" :key="l.k" :d="l.d" :fill="l.c" />
            <path d="M1662.500 269v558M1102.500 269v558M1102 826.500h560" stroke="#fff" />
            <polyline :points="netPath" fill="none" stroke="#0f0" stroke-width="2" />
            <polygon v-for="(h, k) in heads" :key="k" :points="h" fill="#0f0" stroke="#0f0" stroke-width="1.200" />
            <path d="M1345.500 465l4-6.500 3.500 6.500z" fill="#00f" /><path d="M1434 555l17 17M1451 555l-17 17" stroke="#00f" stroke-width="1.800" /><path d="M1439 560h7v7h-7z" fill="#00f" />
          </svg>
          <div class="vscroll"><span class="sb"><i class="tri up" /></span><div class="trk"><div class="thumb"><i /></div></div><span class="sb"><i class="tri" /></span></div>
        </div>
        <div class="hrow"><span class="sb"><i class="tri le" /></span><div class="hthumb"><i /></div><div class="hrest" /><span class="sb"><i class="tri ri" /></span></div>
        <div class="lower"><i class="tri up huge" /></div>
      </section>
    </main>
    <footer class="status"><span v-for="([t, w]) in status" :key="t" :style="{ width: w + 'px' }">{{ t }}</span></footer>
    <div class="taskbar">
      <div v-for="([t, ic, dim], k) in tasks" :key="k" class="task" :class="{ dim, active: k === 7, wide: ic === 'nitro' }"><svg viewBox="0 0 24 24" v-html="taskIcons[ic]" /><span>{{ t }}</span></div>
      <div class="pager">1 / 4</div>
    </div>
    <div class="desk" />
  </div>
</template>

<style>
body { margin: 0; overflow: hidden; background: #000; }
</style>
<style scoped>
* { box-sizing: border-box; }
.screen { width: 1920px; height: 1028px; display: flex; flex-direction: column; overflow: hidden; font: 12px "DejaVu Sans", sans-serif; color: #000; background: #efebe7; }
.screen > * { flex: none; display: flex; }
svg { display: block; flex: none; }
.tool svg, .vslot svg, .slot svg { overflow: visible; }
span { white-space: pre; }
.grow { flex: 1; }
.tri { width: 0; height: 0; flex: none; border: 4px solid transparent; border-top: 4px solid #000; border-bottom: 0; }
.tri.up { border-top: 0; border-bottom: 4px solid #000; }
.tri.le { border: 4px solid transparent; border-right-color: #000; border-left: 0; }
.tri.ri { border: 4px solid transparent; border-left-color: #000; border-right: 0; }
.vm-title { height: 30px; background: #333; border-top: 1px solid #555; border-bottom: 1px solid #666; align-items: center; color: #f4f4f4; font: 14.2px "Open Sans", sans-serif; letter-spacing: .06px; }
.vmlogo { width: 20px; height: 20px; margin: 0 4px; }
.winbtns { width: 90px; height: 28px; margin-left: auto; }
.vm-bar { height: 43px; background: #333; border-bottom: 1px solid #555; align-items: center; border-left: 1px solid #555; border-right: 1px solid #555; padding-bottom: 1px; }
.player { color: #fff; font: 14px "Open Sans", sans-serif; margin-left: 8px; width: 42px; }
.tri.lt { border: 5px solid transparent; border-top-color: #fff; border-bottom: 0; margin-left: 8px; }
.vm-bar .vline { width: 1px; height: 28px; background: #666; margin-left: 10px; }
.vmicons { width: 170px; height: 42px; }
.rew { width: 18px; height: 12px; margin-right: 0; }
.note { width: 20px; height: 20px; margin: 0 9px 0 15px; }
.gnome { height: 28px; background: linear-gradient(#ececec, #dedede); border-bottom: 1px solid #555; align-items: center; font: 14px "Noto Sans", sans-serif; color: #2e3436; letter-spacing: -.3px; padding-bottom: 2px; }
.flower { width: 14px; height: 14px; margin: 0 9px 0 8px; }
.n1 { width: 98.500px; } .n2 { width: 65.500px; }
.clock { letter-spacing: .05px; }
.dot { width: 8px; height: 8px; border-radius: 4px; background: #2e3436; margin-left: 4px; }
.tray { width: 120px; height: 28px; margin-left: 20px; }
.apptitle { height: 37px; background: #f3f3f3; border-bottom: 1px solid #999; align-items: center; color: #2e3436; padding-bottom: 2px; }
.side-l { flex: 0 0 788px; }
.apptitle b { font: 700 14px "Noto Sans", sans-serif; width: 1042px; letter-spacing: .02px; }
.appbtns { width: 90px; height: 34px; }
.menu { height: 20px; background: linear-gradient(#fffffc, #d6d2ce); border-bottom: 1px solid #999; align-items: center; }
.mlogo { width: 16px; height: 16px; margin-right: 6px; }
.menu > span:not(.grow) { margin-right: 11.900px; }
.mdi { width: 52px; height: 18px; margin-right: 1px; }
.bar { height: 28px; background: linear-gradient(#fffffb 10%, #d2cfcb); border-bottom: 1px solid #999; }
.b2 { height: 31px; border-bottom: 3px solid #8d8b88; }
.group { display: flex; align-items: center; border-right: 1px solid #888; flex: none; }
.g4, .gb { border-right: 0; }
.g0 { width: 61px; } .g1 { width: 249px; } .g2 { width: 198px; } .g3 { width: 227px; }
.handle { width: 6px; height: 20px; margin: 0 3px 0 3px; background: repeating-linear-gradient(90deg, #888 0 1px, #fff 1px 2px); flex: none; }
.slot { width: 23px; height: 24px; display: flex; align-items: center; justify-content: center; flex: none; }
.slot svg { width: 18px; height: 18px; }
.g4 .slot { width: 24.600px; }
.slot.on, .vslot.on { background: #bbb8b5; border: 1px solid #999; border-right-color: #fff; border-bottom-color: #fff; }
.sep { width: 1px; height: 20px; background: #999; margin: 0 3px; flex: none; }
.ga { width: 412px; }
.gb .sep { margin: 0 2px; }
.ga .slot { width: 22.800px; } .gb .slot { width: 23.100px; }
.hbtn { width: 100px; height: 25px; border: 1px solid #fff; border-right: 2px solid #777; border-bottom: 2px solid #777; display: flex; align-items: center; justify-content: space-between; padding: 0 3px 0 15px; letter-spacing: -.25px; flex: none; }
.field { width: 196px; height: 24px; margin: 0 2px; background: #fff; border: 2px solid #999; border-right: 1px solid #eee; border-bottom: 1px solid #eee; padding: 1px; flex: none; }
.field svg { width: 18px; height: 18px; }
.combo { width: 150px; height: 21px; margin: 0 1px 0 0; border: 2px solid #777; border-right-color: #ddd; border-bottom-color: #ddd; background: #fff; display: flex; justify-content: flex-end; flex: none; }
.combo span { width: 16px; background: #efebe7; border-right: 2px solid #777; border-bottom: 2px solid #777; display: flex; align-items: center; justify-content: center; }
.main { height: 747px; }
.tools { width: 39px; height: 747px; background: linear-gradient(90deg, #fff 20%, #cfccc8); border-right: 1px solid #999; border-bottom: 1px solid #999; flex: none; }
.hhandle { display: block; height: 6px; margin: 2px 5px 2px 4px; background: repeating-linear-gradient(#888 0 1px, #fff 1px 2px); }
.tool { height: 22px; display: flex; align-items: center; padding-left: 4px; }
.tool svg { width: 18px; height: 18px; }
.tool.on { background: linear-gradient(90deg, transparent 2px, #bbb8b5 2px 24px, transparent 24px); }
.tool > span { margin-left: 3px; width: 12px; height: 20px; display: flex; align-items: center; justify-content: center; }
.tool.on > span { border: 1px solid #fff; border-right-color: #999; border-bottom-color: #999; }
.tri.big { border-width: 5px 4.500px 0; }
.tabs { width: 23px; display: flex; flex-direction: column; align-items: flex-end; flex: none; }
.tabs span { writing-mode: vertical-rl; transform: rotate(180deg); width: 19px; display: flex; align-items: center; justify-content: flex-start; font-size: 12px; letter-spacing: -.05px; background: #a19e9a; border: 1px solid #666; border-right: 1px solid #fff; border-left: 0; border-radius: 0 0 5px 0; }
.t1 { height: 159px; padding-top: 12px; } .t2 { height: 131px; padding-top: 11px; }
.tabs .t3 { height: 120px; width: 22px; background: #efebe7; padding-top: 10px; border-bottom-color: #fff; letter-spacing: .1px; }
.dock { width: 261px; flex: none; display: flex; flex-direction: column; }
.docktitle { height: 18px; display: flex; align-items: center; justify-content: space-between; padding: 0 2px 2px 2px; border-bottom: 1px solid #999; }
.docktitle svg { width: 28px; height: 14px; }
.dockbody { flex: 1; display: flex; min-height: 0; }
.vtools { width: 27px; background: linear-gradient(90deg, #fff 20%, #d3d0cc); border-right: 1px solid #999; border-bottom: 1px solid #999; padding: 2px 1px 0 1px; flex: none; }
.vslot { width: 23px; height: 22px; display: flex; align-items: center; justify-content: center; border: 1px solid transparent; }
.vslot svg { width: 18px; height: 18px; }
.hsep { display: block; height: 1px; margin: 3px 3px 2px; background: #888; }
.panel { width: 227px; margin-left: 6px; display: flex; flex-direction: column; height: 722px; }
.fold { height: 20px; border: 1px solid #fff; border-right: 2px solid #777; border-bottom: 2px solid #777; display: flex; align-items: center; padding-left: 9px; flex: none; }
.rtri { border: 5px solid transparent; border-left: 6px solid #000; border-right: 0; margin-right: 10px; }
.ridge { height: 3px; margin: 7px 0 1px; border: 1px solid #999; border-width: 1px 0; flex: none; }
.ridge.low { margin: 1px 0; }
.treebox { flex: 1; background: #fff; border: 2px solid #888; border-right: 1px solid #ddd; border-bottom: 1px solid #ddd; overflow: hidden; }
.thead { height: 23px; background: #efebe7; border: 1px solid #fff; border-right: 2px solid #888; border-bottom: 2px solid #888; padding: 3px 0 0 3px; line-height: 16px; margin-bottom: .5px; }
.node { display: flex; align-items: center; padding-left: 6px; position: relative; letter-spacing: -.12px; }
.node.l1 { padding-left: 26px; }
.node::before { content: ""; position: absolute; left: 10px; top: 0; height: 100%; border-left: 1px dotted #999; z-index: 0; }
.stem { position: absolute; left: 30px; top: 0; height: 100%; border-left: 1px dotted #999; }
.pm { width: 9px; height: 9px; border: 1px solid #888; position: relative; flex: none; background: linear-gradient(#000, #000) center / 5px 1px no-repeat #fff; }
.pm.plus { background: linear-gradient(#000, #000) center / 5px 1px no-repeat, linear-gradient(#000, #000) center / 1px 5px no-repeat #fff; }
.nopm { width: 4px; margin-left: 5px; border-top: 1px dotted #999; }
.twig { width: 5px; border-top: 1px dotted #999; margin-right: 3px; }
.node svg { width: 18px; height: 18px; margin: 0 5px 0 -1px; }
.splitter { width: 19px; flex: none; border-left: 2px solid #888; border-right: 3px solid #777; background: linear-gradient(90deg, #fff 2px, #aaa 2px 3px, #fff 3px 4px, #efebe7 4px); display: flex; align-items: center; justify-content: flex-end; padding-bottom: 4px; }
.ltri { border: 8px solid transparent; border-right: 6px solid #000; border-left: 0; margin-right: 1px; }
.work { width: 1578px; display: flex; flex-direction: column; flex: none; }
.view { height: 718px; display: flex; flex: none; }
.chip { width: 1560px; height: 718px; background: #000; }
.vscroll { width: 16px; height: 718px; display: flex; flex-direction: column; background: #f7f6f4; }
.sb { width: 16px; height: 16px; flex: none; background: #efebe7; border: 1px solid #fff; border-right: 2px solid #777; border-bottom: 2px solid #777; display: flex; align-items: center; justify-content: center; }
.trk { flex: 1; padding-top: 151px; }
.thumb { height: 419px; background: linear-gradient(90deg, #fff, #c2b7b6); border: 1px solid #777; display: flex; align-items: center; justify-content: center; }
.thumb i { width: 8px; height: 6px; background: repeating-linear-gradient(#888 0 1px, transparent 1px 3px); }
.hrow { height: 16px; display: flex; width: 1560px; }
.hthumb { width: 1469px; background: linear-gradient(#fff, #b5a8a8); border: 1px solid #777; display: flex; align-items: center; justify-content: center; }
.hthumb i { width: 8px; height: 7px; background: repeating-linear-gradient(90deg, #888 0 1px, transparent 1px 3px); }
.hrest { flex: 1; background: #f7f6f4; }
.lower { height: 13px; border-top: 3px solid #fff; border-bottom: 2px solid #777; display: flex; padding-left: 780px; align-items: center; }
.tri.huge { border-width: 0 8px 6px; }
.status { height: 23px; justify-content: flex-end; align-items: center; gap: 6.200px; padding: 1px 2px 0 0; }
.status span { height: 17px; border: 1px solid #999; border-right-color: #fff; border-bottom-color: #fff; line-height: 15px; padding-left: 3px; flex: none; font-size: 12px; }
.taskbar { height: 34px; background: #ececec; border-top: 1px solid #777; align-items: center; padding-left: 1px; gap: 4px; font: 13.300px "Noto Sans", sans-serif; color: #2e3436; }
.task { width: 203.800px; height: 31px; border: 1px solid #f8f8f8; border-right: 1px solid #777; border-bottom: 2px solid #888; border-radius: 2px; display: flex; align-items: center; padding-left: 7px; flex: none; letter-spacing: -.22px; overflow: hidden; }
.task svg { width: 22px; height: 22px; margin-right: 5px; }
.task.wide { padding-left: 4px; } .task.wide svg { width: 24px; height: 24px; }
.task.dim { color: #8a8c8d; } .task.dim svg { opacity: .5; }
.task.active { background: #d9d9d9; border: 1px solid #777; border-right: 0; border-bottom: 0; }
.pager { width: 47px; height: 27px; border: 1px solid #ccc; background: #e1e1e1; display: flex; align-items: center; justify-content: center; white-space: pre; flex: none; font-size: 15px; padding-bottom: 3px; }
.desk { height: 8px; background: linear-gradient(90deg, #0b2f5e, #0d3d80 18%, #0444a6 30%, #06317b 45%, #0444a6 63%, #103a78 76%, #0c326b); }
</style>
